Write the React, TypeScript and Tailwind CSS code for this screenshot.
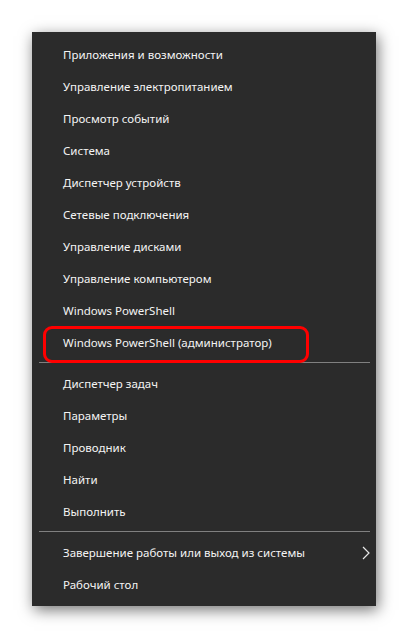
const groupA = [
  "Приложения и возможности",
  "Управление электропитанием",
  "Просмотр событий",
  "Система",
  "Диспетчер устройств",
  "Сетевые подключения",
  "Управление дисками",
  "Управление компьютером",
  "Windows PowerShell",
];

const groupB = ["Диспетчер задач", "Параметры", "Проводник", "Найти", "Выполнить"];

const Item = ({ label }: { label: string }) => (
  <div className="flex h-8 items-center pl-[31px] text-[11.5px] text-[#f4f4f4]">{label}</div>
);

const Divider = () => (
  <div className="flex h-[9px] items-start pt-[3px] pl-[7px] pr-[6px]">
    <div className="h-px w-full bg-[#808080]" />
  </div>
);

export default function App() {
  return (
    <div className="h-[638px] w-[408px] bg-white pl-8 pt-8 font-['Noto_Sans','Open_Sans',sans-serif]">
      <div className="flex h-[574px] w-[344px] flex-col bg-[#2b2b2b] pt-[7px] shadow-[2px_4px_14px_rgba(0,0,0,0.55)]">
        {groupA.map((label) => (
          <Item key={label} label={label} />
        ))}
        <div className="relative flex h-8 items-center pl-[31px] text-[11.5px] text-[#f4f4f4]">
          <div className="absolute left-[11px] top-[-1px] h-[37px] w-[266px] rounded-[9px] border-[3px] border-[#ff0000]" />
          Windows PowerShell (администратор)
        </div>
        <Divider />
        {groupB.map((label) => (
          <Item key={label} label={label} />
        ))}
        <Divider />
        <div className="flex h-8 items-center justify-between pl-[31px] pr-[6px] text-[11.5px] text-[#f4f4f4]">
          <span>Завершение работы или выход из системы</span>
          <svg width="8" height="14" viewBox="0 0 8 14" fill="none">
            <polyline points="1,1 7,7 1,13" stroke="#e8e8e8" strokeWidth="1.2" />
          </svg>
        </div>
        <Item label="Рабочий стол" />
      </div>
    </div>
  );
}
